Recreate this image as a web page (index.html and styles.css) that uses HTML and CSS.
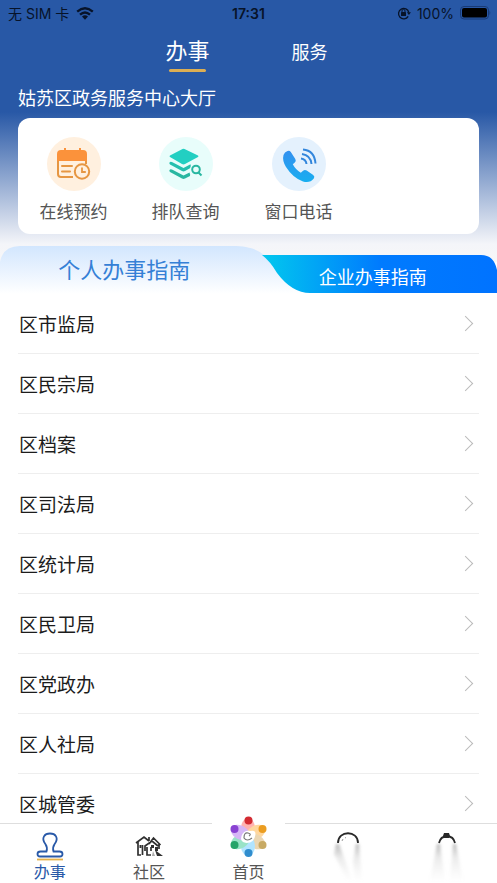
FILE: index.html
```html
<!DOCTYPE html>
<html lang="zh-CN">
<head>
<meta charset="utf-8">
<meta name="viewport" content="width=device-width, initial-scale=1">
<title>办事</title>
<link rel="stylesheet" href="styles.css">
</head>
<body>
<header class="hero">
  <div class="status">
    <div class="status-side">
      <span>无 SIM 卡</span>
      <svg width="18" height="13" viewBox="0 0 18 13" aria-hidden="true"><g fill="none" stroke="currentColor" stroke-width="2.4"><path d="M1.2 4.6Q9-2 16.8 4.6"/><path d="M4 7.6Q9 3.2 14 7.6"/></g><path d="M6 9.6Q9 7 12 9.6L9 12.8z" fill="currentColor"/></svg>
    </div>
    <strong class="clock">17:31</strong>
    <div class="status-side status-right">
      <svg width="14" height="14" viewBox="0 0 14 14" aria-hidden="true"><path d="M11.2 10.3A5.2 5.2 0 1 1 11.8 6.5" fill="none" stroke="currentColor" stroke-width="1.3"/><path d="M9.9 6.3h4L11.9 9z" fill="currentColor"/><rect x="4" y="6" width="5" height="4" rx=".6" fill="currentColor"/><path d="M5 6V4.9a1.5 1.5 0 0 1 3 0V6" fill="none" stroke="currentColor"/></svg>
      <span>100%</span>
      <svg width="31" height="14" viewBox="0 0 31 14" aria-hidden="true"><rect x=".5" y=".5" width="28" height="12.5" rx="3.5" fill="none" stroke="#193b77"/><rect x="2" y="2" width="25" height="9.5" rx="2" fill="#000"/><path d="M29.500 4.500q1.600 2.300 0 4.600z" fill="#193b77"/></svg>
    </div>
  </div>
  <nav class="modes">
    <a class="mode mode-active" href="#work">办事</a>
    <a class="mode" href="#service">服务</a>
  </nav>
  <h1 class="place">姑苏区政务服务中心大厅</h1>
  <section class="card">
    <a class="quick" href="#booking">
      <svg class="quick-icon" viewBox="0 0 54 54" aria-hidden="true"><circle cx="27" cy="27" r="27" fill="#fff0df"/><path d="M10 24v-7q0-4 4-4h3v-2h2v2h13v-2h2v2h2q4 0 4 4v7z" fill="#fb923b"/><path d="M11 24v13q0 3 3 3h12M39 24v3" fill="none" stroke="#e69642" stroke-width="2"/><path d="M15 29h10M15 34.500h8" stroke="#e69642" stroke-width="2" stroke-linecap="round"/><circle cx="35" cy="34.500" r="7.200" fill="#fff0df" stroke="#e69642" stroke-width="2"/><path d="M35 30.500V35h3.800" fill="none" stroke="#e69642" stroke-width="1.800"/></svg>
      <span>在线预约</span>
    </a>
    <a class="quick" href="#queue">
      <svg class="quick-icon" viewBox="0 0 54 54" aria-hidden="true"><circle cx="27" cy="27" r="27" fill="#e8fdfb"/><path d="M11 18.500 23.500 12q1-.5 2 0L39 18.500q1 .8 0 1.600L26 27q-1.500.8-3 0L11 20q-1-.8 0-1.500z" fill="#22cfc2"/><path d="M10.500 25.500q1-1.200 3-.2L24.500 31l7-3.700q1 2-.5 4L26 34q-1.500.8-3 0l-12-6.400q-1-.9-.5-2.100z" fill="#25bfae"/><path d="M10.500 33q1-1.200 3-.2L24.500 38.500l6-3q1 2 .5 3.600L26 41.500q-1.500.8-3 0L11 35q-1-.8-.5-2z" fill="#29b7a1"/><circle cx="37" cy="32.500" r="3.800" fill="#e8fdfb" stroke="#29b7a1" stroke-width="2"/><path d="m39.500 35.500 3 3" stroke="#29b7a1" stroke-width="2"/></svg>
      <span>排队查询</span>
    </a>
    <a class="quick" href="#phone">
      <svg class="quick-icon" viewBox="0 0 54 54" aria-hidden="true"><defs><linearGradient id="call" x1="0" y1="0" x2="0" y2="1"><stop stop-color="#3390ef"/><stop offset="1" stop-color="#18aef0"/></linearGradient></defs><circle cx="27" cy="27" r="27" fill="#e4f1fd"/><path d="M15.500 14q2-.9 3.300 1l4.500 7q1.200 2-.5 3.500l-2 1.800q2.500 5 8 8.500l2.300-2q1.700-1.400 3.600-.2l6.500 4.400q2 1.500.6 3.500Q38 46.500 31 44.500 21 41 14 30 10 23.500 11.500 18q1-3 4-4z" fill="url(#call)"/><g fill="none" stroke="#3286dc" stroke-width="2"><path d="M29 21.500q5 .7 5.500 5.500"/><path d="M30 17q8.500 1.200 9.500 10"/><path d="M31 12.500q11.500 1 12.500 14"/></g></svg>
      <span>窗口电话</span>
    </a>
  </section>
</header>

<div class="guides" role="tablist">
  <svg class="guides-shape" viewBox="0 0 497 48" preserveAspectRatio="none" aria-hidden="true">
    <defs>
      <linearGradient id="personal" x1="0" y1="0" x2="0" y2="1"><stop stop-color="#d2e6fe"/><stop offset="1" stop-color="#fff"/></linearGradient>
      <linearGradient id="company"><stop stop-color="#02c8ee"/><stop offset=".5" stop-color="#007bfe"/><stop offset="1" stop-color="#0073ff"/></linearGradient>
    </defs>
    <path d="M0 48V16Q3 0 20 0H232C266 0 268 15 277 27Q292 47 310 48z" fill="url(#personal)"/>
    <path d="M262 9H481Q494 9 497 24V47H310Q292 47 277 27 270 15 262 9z" fill="url(#company)"/>
    <path d="M310 47H497V48H310z" fill="#fff"/>
  </svg>
  <button class="guide guide-personal" type="button" role="tab" aria-selected="true">个人办事指南</button>
  <button class="guide guide-company" type="button" role="tab" aria-selected="false">企业办事指南</button>
</div>

<main class="list">
  <a class="row" href="#1">区市监局</a>
  <a class="row" href="#2">区民宗局</a>
  <a class="row" href="#3">区档案</a>
  <a class="row" href="#4">区司法局</a>
  <a class="row" href="#5">区统计局</a>
  <a class="row" href="#6">区民卫局</a>
  <a class="row" href="#7">区党政办</a>
  <a class="row" href="#8">区人社局</a>
  <a class="row" href="#9">区城管委</a>
</main>

<nav class="tabbar">
  <a class="tab tab-active" href="#work">
    <svg width="28" height="29" viewBox="0 0 28 29" aria-hidden="true"><path d="M10.500 19.500q1.200-4-1-7.200C4.500 5.500 9 1.500 14 1.500s9.500 4 4.500 10.800q-2.200 3.200-1 7.200h6q3 0 3 2.500T24 24.500H4Q1.500 24.500 1.500 22t3-2.500z" fill="none" stroke="#2959a8" stroke-width="1.800"/><path d="M1 27.500h26" stroke="#e5b14a" stroke-width="1.800"/></svg>
    <span>办事</span>
  </a>
  <a class="tab" href="#community">
    <svg width="28" height="29" viewBox="0 0 28 29" aria-hidden="true"><g fill="none" stroke="#303030" stroke-width="1.700"><path d="m1 11 8-6 5 4M3 10v13h3M7.500 23V13M14 12l4.500-6 7 7M14 5v4M24 12v5M10 19v-5l7-5 6 5M12 15v8h4M16 19v-4"/></g><path d="m20 18 8 6h-6zM4.500 13h2v3h-2zM16 13h3v3h-3zM20 15h3v4h-3z" fill="#303030"/><path d="m18 19 2 5h-3z" fill="#aaa"/></svg>
    <span>社区</span>
  </a>
  <a class="tab tab-home" href="#home">
    <svg width="42" height="42" viewBox="0 0 42 42" aria-hidden="true">
      <g opacity=".5"><ellipse cx="21" cy="12" rx="7" ry="10" fill="#ff6864"/><ellipse cx="21" cy="12" rx="7" ry="10" fill="#ffb03f" transform="rotate(60 21 21)"/><ellipse cx="21" cy="12" rx="7" ry="10" fill="#d9ae65" transform="rotate(120 21 21)"/><ellipse cx="21" cy="12" rx="7" ry="10" fill="#66caff" transform="rotate(180 21 21)"/><ellipse cx="21" cy="12" rx="7" ry="10" fill="#36c990" transform="rotate(240 21 21)"/><ellipse cx="21" cy="12" rx="7" ry="10" fill="#af70ee" transform="rotate(300 21 21)"/></g>
      <circle cx="21.500" cy="4.500" r="4" fill="#d32b32"/><circle cx="35.500" cy="13" r="4" fill="#eb9d20"/><circle cx="35.500" cy="29" r="4" fill="#c8aa64"/><circle cx="21.500" cy="37" r="4" fill="#308dce"/><circle cx="7.500" cy="29" r="4" fill="#25a469"/><circle cx="7.500" cy="13" r="4" fill="#8942d2"/>
      <path d="M14.500 20q2-6 9-5 5-1 5 3-1 9-9 9-7-1-5-7z" fill="#fff"/><path d="M25 22q-5 4-8 0 0-6 4-5 4 1 1 3" fill="none" stroke="#777" stroke-width="1.200"/>
    </svg>
    <span>首页</span>
  </a>
  <a class="tab" href="#messages" aria-label="消息">
    <svg class="fade-icon" width="50" height="50" viewBox="0 0 50 50" aria-hidden="true"><defs><linearGradient id="fade" x1="0" y1="0" x2="0" y2="1"><stop stop-color="#888" stop-opacity=".6"/><stop offset=".35" stop-color="#aaa" stop-opacity=".25"/><stop offset="1" stop-color="#ccc" stop-opacity="0"/></linearGradient><filter id="soft"><feGaussianBlur stdDeviation="1.500"/></filter></defs><path d="M13 12h3l14 38h-5L11 22zM33 12h3l3 38h-7l-2-20z" fill="url(#fade)" filter="url(#soft)"/><path d="M15 11C15-2 35-2 35 11" fill="none" stroke="#292929" stroke-width="1.800"/><path d="m19 9 1-2M22 6l1-.5" stroke="#999"/></svg>
  </a>
  <a class="tab" href="#profile" aria-label="我的">
    <svg class="fade-icon" width="50" height="50" viewBox="0 0 50 50" aria-hidden="true"><path d="M15 12h3l5 38H8zM31 12h3l7 38H28z" fill="url(#fade)" filter="url(#soft)"/><path d="M17 11C19 2 31 2 33 11" fill="none" stroke="#292929" stroke-width="1.800"/><path d="m21 4 1-3h5l1 3-1 2h-5z" fill="#292929"/></svg>
  </a>
</nav>
</body>
</html>
```
FILE: styles.css
```css
* { box-sizing: border-box; }

body {
  display: flex;
  flex-direction: column;
  height: 100vh;
  margin: 0;
  overflow: hidden;
  background: #fff;
  color: #1c1c1c;
  font-family: "Liberation Sans", "Noto Sans CJK SC", sans-serif;
}

a { color: inherit; text-decoration: none; }
svg { display: block; flex: none; }

.hero {
  flex: none;
  padding: 0 18px 28px;
  margin-bottom: -16px;
  background: linear-gradient(#2858a6 0, #2858a6 112px, #f4f5f9 244px, #f7f7f8 100%);
}

.status {
  display: grid;
  grid-template-columns: 1fr auto 1fr;
  align-items: center;
  height: 26px;
  margin: 0 -10px;
  color: #071329;
  font-family: Inter, "Noto Sans CJK SC", sans-serif;
  font-size: 14px;
}
.status-side { display: flex; align-items: center; gap: 7px; }
.status-right { justify-content: flex-end; gap: 6px; margin-right: -2px; }
.clock { font-weight: 600; }

.modes {
  display: grid;
  grid-template-columns: 122px 122px;
  justify-content: center;
  align-items: center;
  height: 54px;
  color: #fff;
}
.mode { justify-self: center; font-size: 18px; line-height: 26px; }
.mode-active { font-size: 22px; line-height: 34px; }
.mode-active::after {
  content: "";
  display: block;
  width: 37px;
  height: 3px;
  margin: 0 auto;
  border-radius: 2px;
  background: #dcae54;
}

.place {
  margin: 6px 0 5px;
  color: #fff;
  font-size: 18px;
  font-weight: 400;
  line-height: 27px;
}

.card {
  display: flex;
  height: 116px;
  border-radius: 12px;
  background: #fff;
}
.quick {
  display: flex;
  flex-direction: column;
  align-items: center;
  gap: 9px;
  width: 113px;
  padding-top: 19px;
  color: #555;
  font-size: 17px;
  line-height: 26px;
}
.quick:first-child { width: 111px; }
.quick-icon { width: 54px; height: 54px; }

.guides {
  position: relative;
  display: grid;
  grid-template-columns: 1fr 1fr;
  flex: none;
  height: 48px;
}
.guides-shape { position: absolute; inset: 0; width: 100%; height: 100%; }
.guide {
  position: relative;
  padding: 0;
  border: 0;
  background: none;
  font-family: inherit;
}
.guide-personal { padding-bottom: 4px; color: #3580d6; font-size: 22px; }
.guide-company { padding-top: 12px; color: #fff; font-size: 18px; }

.list { flex: 1; min-height: 0; padding: 0 18px; overflow: hidden; }
.row {
  display: flex;
  align-items: center;
  justify-content: space-between;
  height: 60px;
  padding: 0 8px 0 1px;
  border-bottom: 1px solid #eee;
  font-size: 19px;
}
.row::after {
  content: "";
  width: 10px;
  height: 10px;
  border: solid #bbb;
  border-width: 1px 1px 0 0;
  transform: rotate(45deg);
}

.tabbar {
  display: grid;
  grid-template-columns: repeat(5, 1fr);
  flex: none;
  height: 60px;
  border-top: 1px solid #dedede;
  background: #fff;
}
.tab {
  display: flex;
  flex-direction: column;
  align-items: center;
  padding-top: 8px;
  color: #555;
  font-size: 16px;
  line-height: 24px;
}
.tab-active { color: #2959a8; }
.tab-home {
  justify-self: center;
  width: 73px;
  height: 68px;
  margin-top: -9px;
  padding-top: 1px;
  background: #fff;
}
.tab-home span { margin-top: 3px; }
```
